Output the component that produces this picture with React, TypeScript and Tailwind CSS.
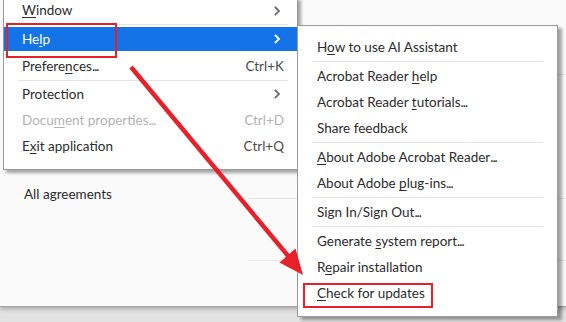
import React from "react";

const FONT = { fontFamily: "Lato, 'Noto Sans', sans-serif" };

function U({ children }: { children: React.ReactNode }) {
  return <span className="underline underline-offset-2 decoration-1">{children}</span>;
}

function E() {
  return <span className="tracking-[-1px]">...</span>;
}

function Chevron({ color }: { color: string }) {
  return (
    <svg width="7" height="10" viewBox="0 0 7 10" className="mr-[3px]">
      <path d="M1.5 1.5 L5 5 L1.5 8.5" fill="none" stroke={color} strokeWidth="1.8" strokeLinecap="square" />
    </svg>
  );
}

function LeftSep({ h = "h-[4px]" }: { h?: string }) {
  return (
    <div className={`${h} flex items-start`}>
      <div className="ml-[14px] mr-[9px] mt-[1px] h-px flex-1 bg-[#e4e4e4]" />
    </div>
  );
}

function SubSep() {
  return (
    <div className="h-[3px] flex items-center">
      <div className="mx-[14px] h-px flex-1 bg-[#e4e4e4]" />
    </div>
  );
}

function SubItem({ children }: { children: React.ReactNode }) {
  return (
    <div className="h-[26px] flex items-center pl-[19px] text-[#2c2c2c]">
      <span className="whitespace-pre">{children}</span>
    </div>
  );
}

export default function App() {
  return (
    <div className="relative w-[566px] h-[322px] overflow-hidden bg-[#e2e2e2] text-[13.5px]" style={FONT}>
      {/* background page */}
      <div className="relative h-[307px] bg-[#fafafa] border-b border-[#a3a3a3] shadow-[0_2px_4px_rgba(0,0,0,0.25)]">
        <div className="absolute left-[248px] right-0 top-[198px] h-px bg-[#e6e6e6]" />
        <div className="absolute left-[248px] right-0 top-[260px] h-px bg-[#e6e6e6]" />
        <div className="absolute left-[300px] right-0 top-[74px] h-px bg-[#e6e6e6]" />
        <div className="pt-[184px] pl-[24px] text-[#2c2c2c]">All agreements</div>
      </div>

      {/* left menu */}
      <div className="absolute left-[3px] top-[-3px] w-[295px] bg-white border border-[#9a9a9a] shadow-[3px_3px_3px_rgba(0,0,0,0.35)] pb-[10px] text-[#2c2c2c]">
        <div className="h-[25px] flex items-center justify-between pl-[18px] pr-[13px]">
          <span><U>W</U>indow</span>
          <Chevron color="#6e6e6e" />
        </div>
        <LeftSep />
        <div className="h-[24px] flex items-center justify-between pl-[18px] pr-[13px] bg-[#1473e6] text-white">
          <span>He<U>l</U>p</span>
          <Chevron color="#ffffff" />
        </div>
        <div className="h-[28px] flex items-center justify-between pl-[18px] pr-[13px] pt-[2px]">
          <span>Prefere<U>n</U>ces<E /></span>
          <span className="text-[#4b4b4b]">Ctrl+K</span>
        </div>
        <LeftSep h="h-[2px]" />
        <div className="h-[26px] flex items-center justify-between pl-[18px] pr-[13px]">
          <span>Protection</span>
          <Chevron color="#6e6e6e" />
        </div>
        <div className="h-[26px] flex items-center justify-between pl-[18px] pr-[13px] text-[#b3b3b3]">
          <span>Docu<U>m</U>ent properties<E /></span>
          <span>Ctrl+D</span>
        </div>
        <div className="h-[26px] flex items-center justify-between pl-[18px] pr-[13px]">
          <span>E<U>x</U>it application</span>
          <span className="text-[#4b4b4b]">Ctrl+Q</span>
        </div>
      </div>

      {/* submenu */}
      <div className="absolute left-[297px] top-[25px] w-[261px] bg-white border border-[#9a9a9a] shadow-[4px_3px_3px_rgba(0,0,0,0.35)] pt-[8px] pb-[10px]">
        <SubItem>H<U>o</U>w to use AI Assistant</SubItem>
        <SubSep />
        <SubItem>Acrobat Reader{" "}<U>h</U>elp</SubItem>
        <SubItem>Acrobat Reader{" "}<U>t</U>utorials<E /></SubItem>
        <SubItem>Share feedback</SubItem>
        <SubSep />
        <SubItem><U>A</U>bout Adobe Acrobat Reader<E /></SubItem>
        <SubItem>About Adobe{" "}<U>p</U>lug-ins<E /></SubItem>
        <SubSep />
        <SubItem>Sign In/Sign Out<E /></SubItem>
        <SubSep />
        <SubItem>Generate{" "}<U>s</U>ystem report<E /></SubItem>
        <SubItem>R<U>e</U>pair installation</SubItem>
        <SubItem><U>C</U>heck for updates</SubItem>
      </div>

      {/* annotations */}
      <div className="absolute left-[6px] top-[23px] w-[111px] h-[35px] border-2 border-[#e8202a]" />
      <div className="absolute left-[303px] top-[283px] w-[130px] h-[25px] border-2 border-[#e8202a]" />
      <svg className="absolute left-0 top-0" width="566" height="322" viewBox="0 0 566 322">
        <line x1="131" y1="67" x2="289" y2="257" stroke="#e8202a" strokeWidth="4.5" />
        <polygon points="303,275 279.5,262.5 295.5,248.6" fill="#e8202a" />
      </svg>
    </div>
  );
}
